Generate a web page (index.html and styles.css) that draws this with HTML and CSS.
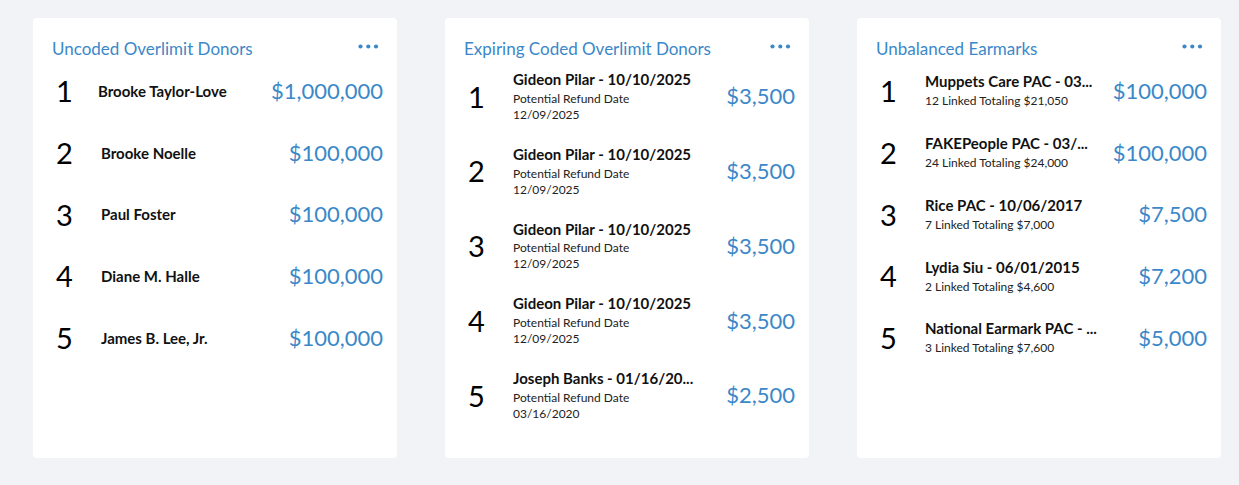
FILE: index.html
```html
<!DOCTYPE html>
<html>
<head>
<meta charset="utf-8">
<link rel="stylesheet" href="styles.css">
</head>
<body>
<div class="board">
  <section class="card">
    <header class="card-head">
      <h2 class="card-title">Uncoded Overlimit Donors</h2>
      <svg class="more" width="21" height="5" viewBox="0 0 21 5"><circle cx="2.5" cy="2.5" r="2.1"/><circle cx="10.3" cy="2.5" r="2.1"/><circle cx="18" cy="2.5" r="2.1"/></svg>
    </header>
    <ol class="rows">
      <li class="row"><span class="rank">1</span><div class="info"><div class="name first">Brooke Taylor-Love</div></div><span class="amount">$1,000,000</span></li>
      <li class="row"><span class="rank">2</span><div class="info"><div class="name">Brooke Noelle</div></div><span class="amount">$100,000</span></li>
      <li class="row"><span class="rank">3</span><div class="info"><div class="name">Paul Foster</div></div><span class="amount">$100,000</span></li>
      <li class="row"><span class="rank">4</span><div class="info"><div class="name">Diane M. Halle</div></div><span class="amount">$100,000</span></li>
      <li class="row"><span class="rank">5</span><div class="info"><div class="name">James B. Lee, Jr.</div></div><span class="amount">$100,000</span></li>
    </ol>
  </section>

  <section class="card">
    <header class="card-head">
      <h2 class="card-title">Expiring Coded Overlimit Donors</h2>
      <svg class="more" width="21" height="5" viewBox="0 0 21 5"><circle cx="2.5" cy="2.5" r="2.1"/><circle cx="10.3" cy="2.5" r="2.1"/><circle cx="18" cy="2.5" r="2.1"/></svg>
    </header>
    <ol class="rows">
      <li class="row tall"><span class="rank">1</span><div class="info"><div class="name">Gideon Pilar - 10/10/2025</div><div class="sub">Potential Refund Date</div><div class="sub">12/09/2025</div></div><span class="amount">$3,500</span></li>
      <li class="row tall"><span class="rank">2</span><div class="info"><div class="name">Gideon Pilar - 10/10/2025</div><div class="sub">Potential Refund Date</div><div class="sub">12/09/2025</div></div><span class="amount">$3,500</span></li>
      <li class="row tall"><span class="rank">3</span><div class="info"><div class="name">Gideon Pilar - 10/10/2025</div><div class="sub">Potential Refund Date</div><div class="sub">12/09/2025</div></div><span class="amount">$3,500</span></li>
      <li class="row tall"><span class="rank">4</span><div class="info"><div class="name">Gideon Pilar - 10/10/2025</div><div class="sub">Potential Refund Date</div><div class="sub">12/09/2025</div></div><span class="amount">$3,500</span></li>
      <li class="row tall"><span class="rank">5</span><div class="info"><div class="name">Joseph Banks - 01/16/20...</div><div class="sub">Potential Refund Date</div><div class="sub">03/16/2020</div></div><span class="amount">$2,500</span></li>
    </ol>
  </section>

  <section class="card">
    <header class="card-head">
      <h2 class="card-title">Unbalanced Earmarks</h2>
      <svg class="more" width="21" height="5" viewBox="0 0 21 5"><circle cx="2.5" cy="2.5" r="2.1"/><circle cx="10.3" cy="2.5" r="2.1"/><circle cx="18" cy="2.5" r="2.1"/></svg>
    </header>
    <ol class="rows">
      <li class="row"><span class="rank">1</span><div class="info"><div class="name">Muppets Care PAC - 03...</div><div class="sub">12 Linked Totaling $21,050</div></div><span class="amount">$100,000</span></li>
      <li class="row"><span class="rank">2</span><div class="info"><div class="name">FAKEPeople PAC - 03/...</div><div class="sub">24 Linked Totaling $24,000</div></div><span class="amount">$100,000</span></li>
      <li class="row"><span class="rank">3</span><div class="info"><div class="name">Rice PAC - 10/06/2017</div><div class="sub">7 Linked Totaling $7,000</div></div><span class="amount">$7,500</span></li>
      <li class="row"><span class="rank">4</span><div class="info"><div class="name">Lydia Siu - 06/01/2015</div><div class="sub">2 Linked Totaling $4,600</div></div><span class="amount">$7,200</span></li>
      <li class="row"><span class="rank">5</span><div class="info"><div class="name">National Earmark PAC - ...</div><div class="sub">3 Linked Totaling $7,600</div></div><span class="amount">$5,000</span></li>
    </ol>
  </section>
</div>
</body>
</html>
```

FILE: styles.css
```css
html, body {
  margin: 0;
  padding: 0;
  background: #f2f3f7;
  font-family: Lato, "Open Sans", sans-serif;
}

.board {
  display: grid;
  grid-template-columns: repeat(3, 364px);
  column-gap: 48px;
  padding: 18px 0 0 33px;
}

.card {
  background: #ffffff;
  border-radius: 4px;
  height: 440px;
  box-sizing: border-box;
  padding: 0 14px 0 19px;
}

.card-head {
  display: flex;
  align-items: center;
  justify-content: space-between;
  padding: 21px 4px 0 0;
  height: 20px;
}

.card-title {
  margin: 0;
  font-size: 17px;
  font-weight: 400;
  line-height: 20px;
  color: #3b88c9;
}

.more {
  fill: #3b88c9;
  display: block;
  margin-top: -5px;
}

.rows {
  list-style: none;
  margin: 1px 0 0;
  padding: 0;
}

.row {
  display: flex;
  align-items: center;
  padding: 12px 0;
  min-height: 37.75px;
}

.row.tall {
  padding: 11px 0;
  min-height: 0;
}

.card .row.tall:first-child {
  padding-top: 10px;
}

.rank {
  width: 49px;
  padding-left: 4px;
  box-sizing: border-box;
  font-size: 29px;
  line-height: 37.75px;
  color: #000;
  flex: none;
}

.info {
  flex: 1 1 auto;
  min-width: 0;
}

.name {
  font-size: 15px;
  font-weight: 700;
  line-height: 18px;
  margin-bottom: 3px;
  color: #111;
  white-space: nowrap;
}

.row.tall .name {
  margin-bottom: 2.75px;
}

.name.first {
  margin-left: -3px;
}

.row:not(.tall) .info .name:only-child {
  margin-bottom: 0;
}

.sub {
  font-size: 12px;
  line-height: 16px;
  color: #222;
  white-space: nowrap;
}

.amount {
  flex: none;
  padding-left: 12px;
  text-align: right;
  font-size: 22px;
  line-height: 28px;
  color: #3b88c9;
  white-space: nowrap;
}
```
